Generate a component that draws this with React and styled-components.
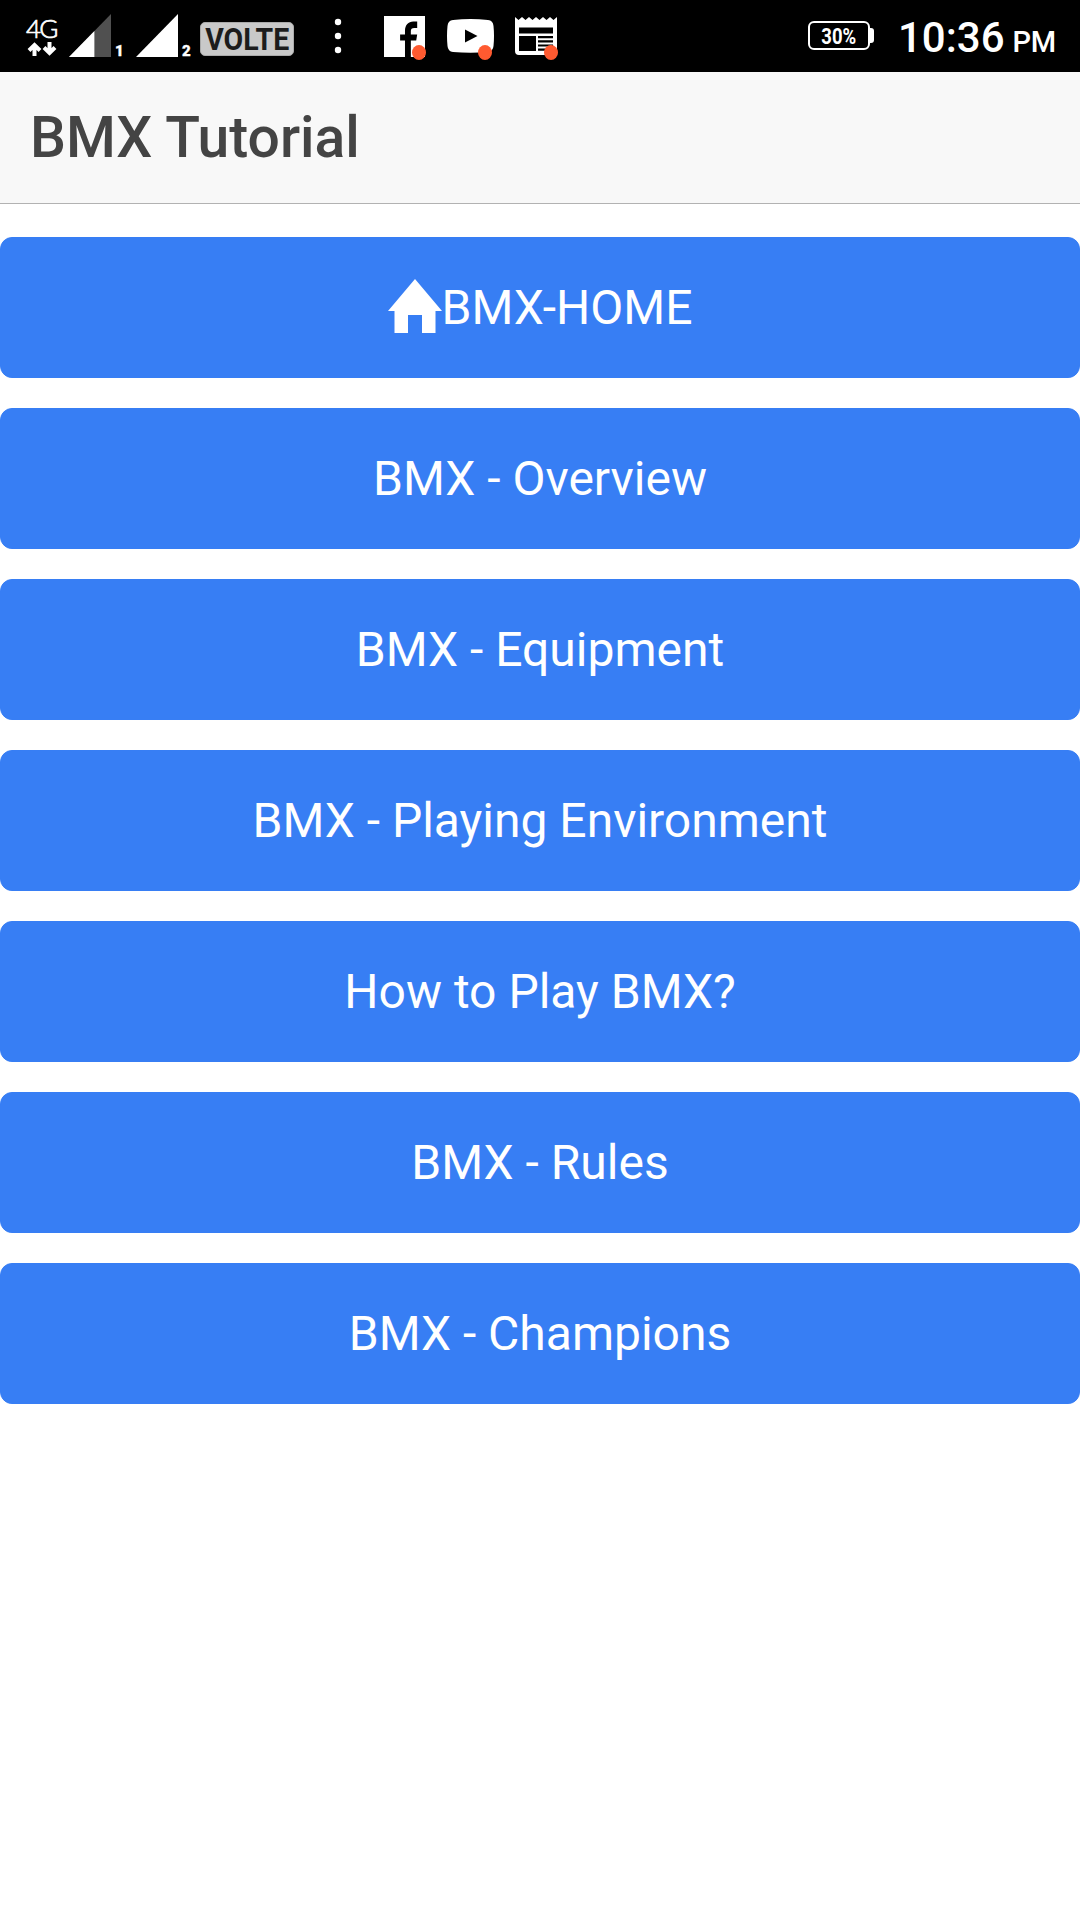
import React from "react";
import styled, { createGlobalStyle } from "styled-components";

const GlobalStyle = createGlobalStyle`
  *, *::before, *::after { box-sizing: border-box; }
  html, body { margin: 0; padding: 0; background: #fff; }
  body { font-family: Roboto, "Noto Sans", sans-serif; }
`;

const Screen = styled.div`
  display: flex;
  flex-direction: column;
  width: 100%;
  min-height: 100vh;
  overflow: hidden;
  background: #fff;
`;

const StatusBar = styled.header`
  display: flex;
  justify-content: space-between;
  height: 72px;
  padding: 0 24px 0 26px;
  background: #000;
  color: #fff;
`;

const StatusGroup = styled.div`
  display: flex;
  align-items: flex-start;
`;

const Network = styled.div`
  display: flex;
  flex-direction: column;
  width: 33px;
  margin-top: 15px;
`;

const NetworkLabel = styled.span`
  height: 26px;
  font-family: Lato, sans-serif;
  font-size: 26px;
  font-weight: 300;
  line-height: 27px;
  letter-spacing: -1.8px;
  white-space: nowrap;
  -webkit-text-stroke: 0.7px #fff;
`;

const Icon = styled.svg`
  display: block;
  flex: none;
  width: ${(p) => p.$w}px;
  height: ${(p) => p.$h}px;
  margin-top: ${(p) => p.$top || 0}px;
  margin-bottom: ${(p) => p.$bottom || 0}px;
  margin-left: ${(p) => p.$gap || 0}px;
`;

const SimNumber = styled.span`
  width: 12px;
  margin-top: 43px;
  margin-left: 4px;
  font-size: 15px;
  font-weight: 900;
  line-height: 16px;
  -webkit-text-stroke: 0.3px #fff;
`;

const VolteBadge = styled.span`
  display: flex;
  align-items: center;
  justify-content: center;
  width: 94px;
  height: 34px;
  margin-top: 22px;
  margin-left: ${(p) => p.$gap}px;
  border: 1px solid #aaa;
  border-radius: 5px;
  background: #c9c9c9;
  color: #1c1c1c;
`;

const VolteLabel = styled.span`
  font-size: 32px;
  font-weight: 700;
  line-height: 32px;
  transform: scaleX(0.89);
`;

const Notification = styled.div`
  position: relative;
  flex: none;
  width: ${(p) => p.$w}px;
  height: 72px;
  margin-left: ${(p) => p.$gap}px;
`;

const NotificationDot = styled.span`
  position: absolute;
  top: 45px;
  left: ${(p) => p.$left}px;
  width: 14px;
  height: 15px;
  border-radius: 50%;
  background: #ff5a30;
`;

const Battery = styled.div`
  display: flex;
  align-items: center;
  margin-top: 21px;
`;

const BatteryBody = styled.div`
  display: flex;
  align-items: center;
  justify-content: center;
  width: 62px;
  height: 29px;
  border: 2px solid #fff;
  border-radius: 6px;
`;

const BatteryLevel = styled.span`
  padding-top: 2px;
  font-size: 22px;
  font-weight: 700;
  line-height: 24px;
  transform: scaleX(0.84);
`;

const BatteryTip = styled.div`
  width: 4px;
  height: 15px;
  border-radius: 0 3px 3px 0;
  background: #fff;
`;

const Clock = styled.time`
  display: flex;
  align-items: baseline;
  margin-top: 13px;
  margin-left: 24px;
  font-size: 42px;
  font-weight: 500;
  line-height: 50px;
  white-space: nowrap;
`;

const Meridiem = styled.span`
  margin-left: 8px;
  font-size: 29px;
  letter-spacing: -0.2px;
`;

const TitleBar = styled.div`
  display: flex;
  align-items: center;
  height: 132px;
  padding: 0 30px;
  border-bottom: 1px solid #b2b2b2;
  background: #f8f8f8;
`;

const Title = styled.h1`
  margin: 0;
  color: #444;
  font-size: 57px;
  font-weight: 500;
  line-height: 66px;
`;

const Menu = styled.nav`
  display: flex;
  flex-direction: column;
  gap: 30px;
  padding-top: 33px;
`;

const MenuButton = styled.button`
  display: flex;
  align-items: center;
  justify-content: center;
  height: 141px;
  padding: 0;
  border: 1px solid #377ef4;
  border-radius: 12px;
  background: #377ef4;
  color: #fff;
  font-family: inherit;
  font-size: 48px;
  font-weight: 400;
  line-height: 56px;
`;

const items = [
  "BMX - Overview",
  "BMX - Equipment",
  "BMX - Playing Environment",
  "How to Play BMX?",
  "BMX - Rules",
  "BMX - Champions",
];

const DataArrows = () => (
  <Icon $w={31} $h={16} $gap={1} viewBox="0 0 31 16" fill="none" stroke="#fff" strokeWidth="4" strokeLinejoin="miter">
    <path d="M7.500 15V4M2 9.500 7.500 4 13 9.500" />
    <path d="M22.500 1V12M17 6.500 22.500 12 28 6.500" />
  </Icon>
);

const Signal = ({ weak, gap }) => (
  <Icon $w={42} $h={43} $top={14} $gap={gap} viewBox="0 0 43 43" preserveAspectRatio="none">
    <path d="M43 0V43H0Z" fill={weak ? "#505050" : "#fff"} />
    {weak && <path d="M26 17V43H0Z" fill="#fff" />}
  </Icon>
);

export default function App() {
  return (
    <>
      <GlobalStyle />
      <Screen>
        <StatusBar>
          <StatusGroup>
            <Network>
              <NetworkLabel>4G</NetworkLabel>
              <DataArrows />
            </Network>
            <Signal weak gap={10} />
            <SimNumber>1</SimNumber>
            <Signal gap={9} />
            <SimNumber>2</SimNumber>
            <VolteBadge $gap={6}>
              <VolteLabel>VOLTE</VolteLabel>
            </VolteBadge>
            <Icon $w={8} $h={36} $top={18} $gap={40} viewBox="0 0 8 36" fill="#fff">
              <circle cx="4" cy="4" r="3.2" />
              <circle cx="4" cy="18" r="3.2" />
              <circle cx="4" cy="32" r="3.2" />
            </Icon>
            <Notification $w={41} $gap={42}>
              <Icon $w={41} $h={41} $top={16} viewBox="0 0 42 41" preserveAspectRatio="none">
                <path d="M0 0H42V41H0Z" fill="#fff" />
                <path d="M21.500 41V24.500H16.500V18.500H21.500V15C21.500 9 25 5.500 30 5.500H34V12H31C28.500 12 27.500 13 27.500 15V18.500H34L33 24.500H27.500V41Z" fill="#000" />
              </Icon>
              <NotificationDot $left={28} />
            </Notification>
            <Notification $w={47} $gap={22}>
              <Icon $w={47} $h={34} $top={19} viewBox="0 0 47 34">
                <path d="M6 1Q23.500-1 41 1Q46 1.500 46.500 7Q47.500 17 46.500 27Q46 32.500 41 33Q23.500 34.500 6 33Q1 32.500.5 27Q-.5 17 .5 7Q1 1.500 6 1Z" fill="#fff" />
                <path d="M18 10.500 30.500 17 18 23.500Z" fill="#000" />
              </Icon>
              <NotificationDot $left={31} />
            </Notification>
            <Notification $w={42} $gap={21}>
              <Icon $w={42} $h={38} $top={17} viewBox="0 0 42 38">
                <path d="M0 0 3.500 3 7 0 10.500 3 14 0 17.500 3 21 0 24.500 3 28 0 31.500 3 35 0 38.500 3 42 0V38H4Q0 38 0 34Z" fill="#fff" />
                <path d="M4 10.500H38V16.500H4ZM4 19H21V34H4ZM23 19H38V21.200H23ZM23 23.200H38V25.400H23ZM23 27.400H38V29.600H23ZM23 31.600H38V33.800H23Z" fill="#000" />
              </Icon>
              <NotificationDot $left={29} />
            </Notification>
          </StatusGroup>
          <StatusGroup>
            <Battery>
              <BatteryBody>
                <BatteryLevel>30%</BatteryLevel>
              </BatteryBody>
              <BatteryTip />
            </Battery>
            <Clock>
              10:36<Meridiem>PM</Meridiem>
            </Clock>
          </StatusGroup>
        </StatusBar>
        <TitleBar>
          <Title>BMX Tutorial</Title>
        </TitleBar>
        <Menu>
          <MenuButton>
            <Icon $w={54} $h={54} $bottom={4} viewBox="0 0 54 54" fill="#fff">
              <path d="M27 0 54 32H47.500V54H34V36H20V54H6.500V32H0Z" />
            </Icon>
            BMX-HOME
          </MenuButton>
          {items.map((label) => (
            <MenuButton key={label}>{label}</MenuButton>
          ))}
        </Menu>
      </Screen>
    </>
  );
}
